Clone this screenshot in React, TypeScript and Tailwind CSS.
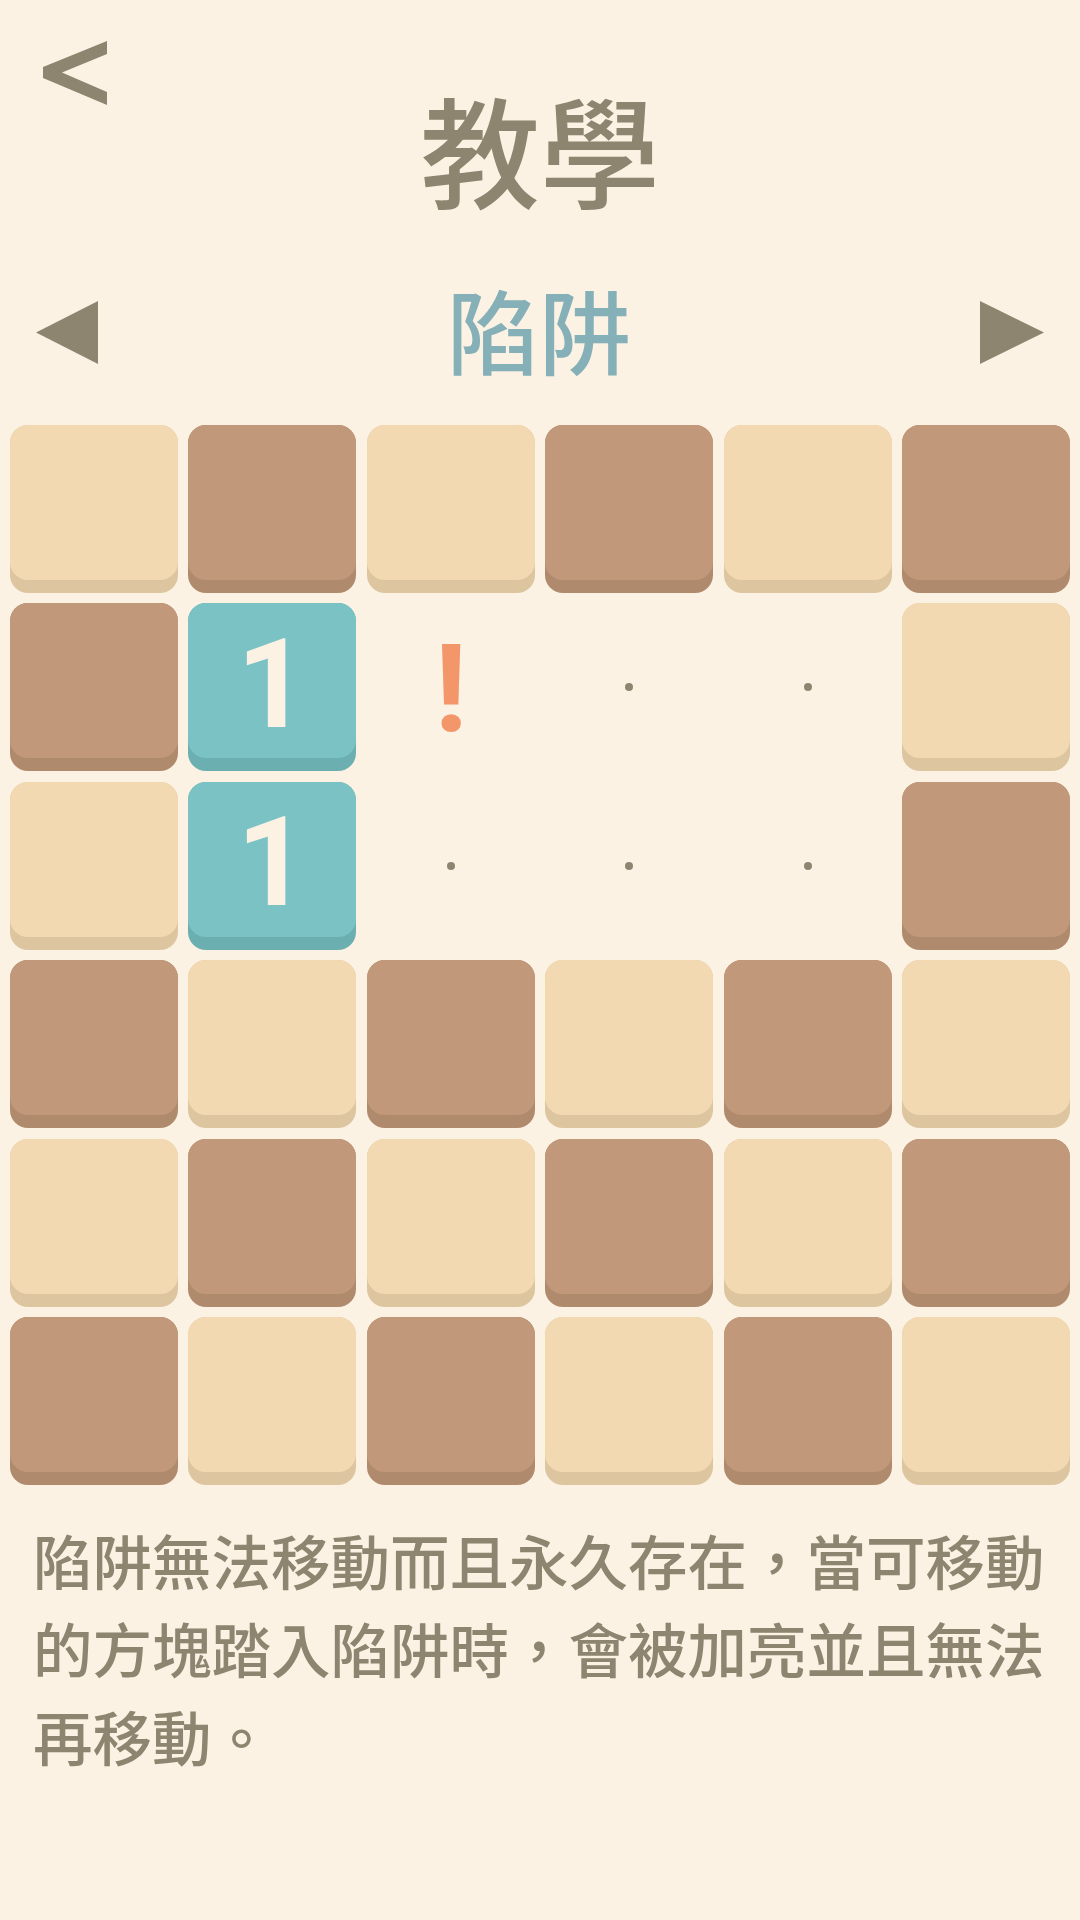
type Cell = "L" | "D" | "T" | "!" | ".";

const board: Cell[][] = [
  ["L", "D", "L", "D", "L", "D"],
  ["D", "T", "!", ".", ".", "L"],
  ["L", "T", ".", ".", ".", "D"],
  ["D", "L", "D", "L", "D", "L"],
  ["L", "D", "L", "D", "L", "D"],
  ["D", "L", "D", "L", "D", "L"],
];

function Block({ cell }: { cell: Cell }) {
  if (cell === "!") {
    return (
      <div className="aspect-square flex items-center justify-center pt-[6px]">
        <span className="font-['Roboto',sans-serif] font-bold text-[122px] leading-none text-[#f3976a]">
          !
        </span>
      </div>
    );
  }
  if (cell === ".") {
    return (
      <div className="aspect-square flex items-center justify-center">
        <span className="block w-[8px] h-[8px] rounded-full bg-[#8e8571]" />
      </div>
    );
  }
  const look =
    cell === "L"
      ? { base: "bg-[#ddc5a0]", face: "bg-[#f2d9b1]" }
      : cell === "D"
        ? { base: "bg-[#b08a6d]", face: "bg-[#c2987a]" }
        : { base: "bg-[#6cafb1]", face: "bg-[#7bc2c4]" };
  return (
    <div className={`aspect-square rounded-[18px] pb-[13px] ${look.base}`}>
      <div className={`h-full rounded-[18px] flex items-center justify-center ${look.face}`}>
        {cell === "T" && (
          <span className="font-['Roboto',sans-serif] font-bold text-[124px] leading-none text-[#fbf2e4] pt-[8px]">
            1
          </span>
        )}
      </div>
    </div>
  );
}

export default function App() {
  return (
    <div className="min-h-screen w-full bg-[#fbf2e4] font-['Noto_Sans_CJK_TC',sans-serif]">
      <header className="relative pt-[88px]">
        <button className="absolute left-[43px] top-[41px]" aria-label="back">
          <svg width="64" height="64" viewBox="43 41 64 64">
            <polygon
              points="107,41 43,67 43,78 107,105 107,92 62,72.5 107,54"
              fill="#8e8571"
            />
          </svg>
        </button>
        <h1 className="text-center text-[120px] leading-[120px] font-medium text-[#8e8571]">
          教學
        </h1>
      </header>

      <div className="mt-[74px] h-[92px] px-[36px] flex items-center justify-between">
        <svg width="62" height="63" viewBox="0 0 62 63" className="mt-[8px]">
          <polygon points="62,0 0,31.5 62,63" fill="#8e8571" />
        </svg>
        <h2 className="text-[92px] leading-[92px] font-medium text-[#86b0b8]">陷阱</h2>
        <svg width="64" height="63" viewBox="0 0 64 63" className="mt-[8px]">
          <polygon points="0,0 64,31.5 0,63" fill="#8e8571" />
        </svg>
      </div>

      <div className="mt-[51px] px-[10px] grid grid-cols-6 gap-[10.4px]">
        {board.flat().map((cell, i) => (
          <Block key={i} cell={cell} />
        ))}
      </div>

      <p className="mt-[30px] pl-[33px] pr-[26px] text-[59.5px] leading-[88px] font-medium text-[#8e8571]">
        陷阱無法移動而且永久存在，當可移動的方塊踏入陷阱時，會被加亮並且無法再移動。
      </p>
    </div>
  );
}
